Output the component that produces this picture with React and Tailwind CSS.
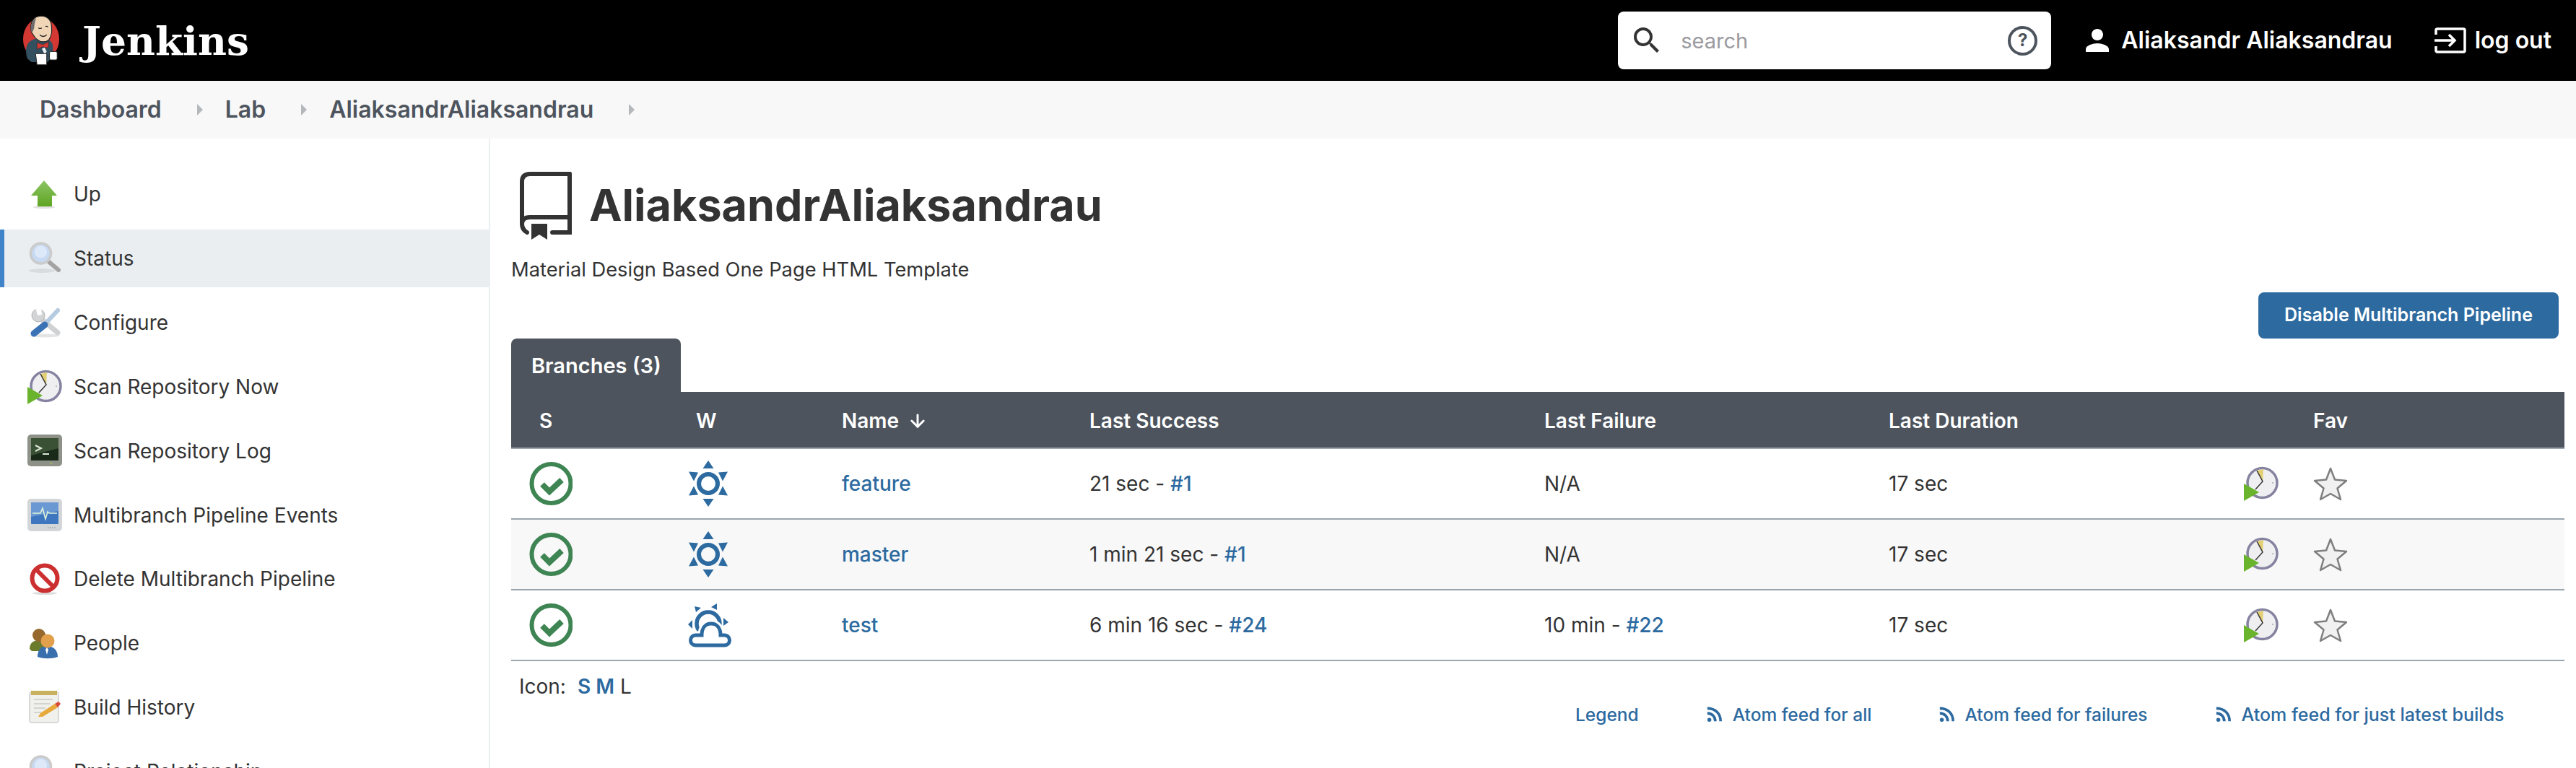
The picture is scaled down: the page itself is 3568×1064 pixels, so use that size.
import { MdSearch, MdPerson } from 'react-icons/md'
import { ArrowDown } from 'lucide-react'

const inter = "font-['Inter',sans-serif]"

function Mascot() {
  return (
    <svg viewBox="0 0 56 76" className="w-[54px] h-[76px] shrink-0">
      <ellipse cx="28" cy="36" rx="26" ry="30" fill="#d33833" />
      <path d="M8 64c-3-10-2-18 2-23 6-5 12-6 16-6l12 2c5 2 7 6 7 12v12l-8 8H14z" fill="#335061" />
      <path d="M14 26C11 14 16 3 28 3c9 0 15 6 15 16 1 9-1 14-4 18-4 4-12 4-16 0-4-2-6-7-9-11z" fill="#f0d6b7" stroke="#222" strokeWidth="1.2" />
      <path d="M14 26c-2-8 0-16 7-20-2 5-3 10-3 14l-2 5z" fill="#6d6b6d" />
      <path d="M24 20c2 1 4 1 5 0M34 18c2-1 3 0 4 1" stroke="#222" strokeWidth="1.2" fill="none" />
      <path d="M26 30c3 3 7 3 10 0" stroke="#222" strokeWidth="1.4" fill="none" />
      <path d="M22 41l8 3 9-4-1 9-8-2-8 4z" fill="#d33833" stroke="#222" strokeWidth=".6" />
      <path d="M29 50l4-2 3 6-3 4z" fill="#fff" opacity=".9" />
      <path d="M20 57h16v16H22z" fill="#fff" stroke="#222" strokeWidth="1" />
      <rect x="40" y="54" width="11" height="12" rx="2" fill="#fff" stroke="#222" strokeWidth="1" />
    </svg>
  )
}

function UpIcon() {
  return (
    <svg viewBox="0 0 48 48" className="w-12 h-12">
      <defs>
        <linearGradient id="upg" x1="0" y1="0" x2="0" y2="1"><stop offset="0" stopColor="#8cc465" /><stop offset="1" stopColor="#5fa521" /></linearGradient>
      </defs>
      <ellipse cx="23" cy="42" rx="15" ry="2" fill="#e2e2e2" />
      <path d="M23 5L41 26H34V41H14V26H5z" fill="url(#upg)" />
    </svg>
  )
}

function MagnifierIcon() {
  return (
    <svg viewBox="0 0 48 48" className="w-12 h-12">
      <ellipse cx="20" cy="41" rx="18" ry="3" fill="#d8dcdf" />
      <path d="M30 29l13 11" stroke="#a3a3a3" strokeWidth="6" strokeLinecap="round" />
      <circle cx="18.500" cy="17" r="14" fill="#c7daf2" stroke="#cbcbcb" strokeWidth="3.500" />
      <circle cx="18.500" cy="15" r="8.500" fill="#dde9f8" />
    </svg>
  )
}

function ToolsIcon() {
  return (
    <svg viewBox="0 0 48 48" className="w-12 h-12">
      <ellipse cx="24" cy="42" rx="20" ry="2.500" fill="#e4e4e4" />
      <path d="M17 17l25 21" stroke="#cfd1d2" strokeWidth="7" strokeLinecap="round" />
      <circle cx="15" cy="14" r="9" fill="#d2d4d5" stroke="#b5b5b5" strokeWidth="1" />
      <path d="M11 2l8 0 1 11-6 1z" fill="#fff" />
      <path d="M42 7L27 23" stroke="#b7cbe0" strokeWidth="6" strokeLinecap="round" />
      <path d="M24 27L9 39" stroke="#3b72b5" strokeWidth="9" strokeLinecap="round" />
    </svg>
  )
}

function ClockIcon() {
  return (
    <svg viewBox="0 0 48 48" className="w-12 h-12">
      <circle cx="25.500" cy="23" r="20.500" fill="#efeff2" stroke="#8583a0" strokeWidth="3.500" />
      <path d="M26 21L18 6l9-2z" fill="#e3cf74" />
      <path d="M18 6l8 15-10 11" stroke="#333" strokeWidth="1.5" fill="none" />
      <circle cx="40" cy="23" r="1" fill="#aaa" />
      <path d="M0 24L21 36 0 48z" fill="#6ab42d" />
    </svg>
  )
}

function TerminalIcon() {
  return (
    <svg viewBox="0 0 48 48" className="w-12 h-12">
      <rect x="0" y="1" width="48" height="44" rx="5" fill="#8d9188" />
      <rect x="5" y="6" width="38" height="31" fill="#1a2a18" />
      <path d="M5 6h38v14L5 30z" fill="#3a5135" />
      <path d="M11 16l8 4-8 4" stroke="#dfe8d8" strokeWidth="2" fill="none" />
      <path d="M21 28h9" stroke="#dfe8d8" strokeWidth="2" />
      <circle cx="33" cy="41" r="1" fill="#a6d04e" />
    </svg>
  )
}

function MonitorIcon() {
  return (
    <svg viewBox="0 0 48 48" className="w-12 h-12">
      <rect x="0" y="1" width="48" height="45" rx="5" fill="#d3d6d8" />
      <rect x="5" y="6" width="38" height="30" rx="1" fill="#3e76bf" />
      <path d="M5 6h38v12L5 26z" fill="#6a98d3" />
      <path d="M7 21h11l3-7 4 15 3-10 2 2h11" stroke="#dff3da" strokeWidth="1.6" fill="none" />
      <path d="M28 41h12" stroke="#b5b8ba" strokeWidth="2" strokeDasharray="2 1" />
    </svg>
  )
}

function NoIcon() {
  return (
    <svg viewBox="0 0 48 48" className="w-12 h-12">
      <ellipse cx="24" cy="44" rx="17" ry="2" fill="#ddd" />
      <circle cx="24" cy="23" r="17.500" fill="#fff" stroke="#cc2f2f" strokeWidth="6" />
      <path d="M12 11l24 24" stroke="#cc2f2f" strokeWidth="6" />
    </svg>
  )
}

function PeopleIcon() {
  return (
    <svg viewBox="0 0 48 48" className="w-12 h-12">
      <path d="M3 32c0-8 5-12 13-12s13 4 13 12l-8 3H6z" fill="#6a7c2b" />
      <circle cx="16" cy="13" r="9" fill="#96682e" />
      <path d="M14 43c0-10 5-15 13-15s15 5 15 15c-8 3-20 3-28 0z" fill="#3a6fae" />
      <path d="M27 30l-2 3 2 7 2-7z" fill="#fff" />
      <circle cx="28" cy="21" r="9.500" fill="#e2a04d" />
    </svg>
  )
}

function NotepadIcon() {
  return (
    <svg viewBox="0 0 48 48" className="w-12 h-12">
      <rect x="3" y="3" width="40" height="42" rx="2" fill="#f0f0ec" stroke="#bbb" />
      <rect x="5" y="1" width="36" height="6" fill="#c9b25f" />
      <path d="M9 13h26M9 19h22M9 25h16M9 31h10" stroke="#c9c9c5" strokeWidth="1.500" />
      <path d="M15 37l3-5 20-13 4 5-21 13z" fill="#e7a93b" />
      <path d="M38 19l4 5 4-5-3-3z" fill="#d9483b" />
    </svg>
  )
}

function CheckIcon() {
  return (
    <svg viewBox="0 0 60 60" className="w-[60px] h-[60px]">
      <circle cx="30.500" cy="30" r="27" fill="none" stroke="#3e8553" strokeWidth="6" />
      <path d="M18 31l10 10 17-16" fill="none" stroke="#3e8553" strokeWidth="8" strokeLinejoin="miter" />
    </svg>
  )
}

function SunIcon() {
  return (
    <svg viewBox="0 0 56 64" className="w-14 h-16 fill-[#2c6aa0]">
      <circle cx="28" cy="32" r="13" fill="none" stroke="#2c6aa0" strokeWidth="6" />
      <path d="M28 0l7.500 11h-15z" />
      <path d="M28 64l7.500-11h-15z" />
      <path d="M1 15.500l13 1 -6 12z" />
      <path d="M55 15.500l-13 1 6 12z" />
      <path d="M1 48.500l13-1 -6-12z" />
      <path d="M55 48.500l-13-1 6-12z" />
    </svg>
  )
}

function CloudIcon() {
  return (
    <svg viewBox="0 0 61 61" className="w-[61px] h-[61px] fill-[#2c6aa0]">
      <circle cx="28" cy="28" r="16" fill="none" stroke="#2c6aa0" strokeWidth="5.500" />
      <path d="M11 58H50C60 58 60 44 50 44H45C45 34 40 28 32 28C24 28 19 34 19 44H11C1 44 1 58 11 58z" fill="#fff" stroke="#fff" strokeWidth="11" />
      <path d="M11 58H50C60 58 60 44 50 44H45C45 34 40 28 32 28C24 28 19 34 19 44H11C1 44 1 58 11 58z" fill="#fff" stroke="#2c6aa0" strokeWidth="5" />
      <path d="M0 29l6-6v12zM49 20l7 6-7 5zM9 4l9 2-7 6zM40 0l-8 5 8 4z" />
    </svg>
  )
}

function StarIcon() {
  return (
    <svg viewBox="0 0 48 48" className="w-12 h-12">
      <path d="M24 3l6 15.500 16 1.500-12.500 10.500L38 46l-14-8-14 8 4.500-15.500L2 20l16-1.500z" fill="#f1f1f1" stroke="#7f7f7f" strokeWidth="2.500" strokeLinejoin="round" />
    </svg>
  )
}

function FeedIcon() {
  return (
    <svg viewBox="0 0 24 24" className="w-[22px] h-[22px] mr-[15px] fill-none stroke-[#2c6aa0] stroke-[4]">
      <circle cx="5" cy="20" r="3" className="fill-[#2c6aa0] stroke-none" />
      <path d="M2 10c7 0 12 5 12 12" />
      <path d="M2 2.500c12 0 20 8 20 19.500" />
    </svg>
  )
}

const sideItems = [
  ['Up', UpIcon],
  ['Status', MagnifierIcon],
  ['Configure', ToolsIcon],
  ['Scan Repository Now', ClockIcon],
  ['Scan Repository Log', TerminalIcon],
  ['Multibranch Pipeline Events', MonitorIcon],
  ['Delete Multibranch Pipeline', NoIcon],
  ['People', PeopleIcon],
  ['Build History', NotepadIcon],
  ['Project Relationship', MagnifierIcon],
]

const rows = [
  { name: 'feature', Weather: SunIcon, ok: '21 sec - ', okNum: '#1', fail: 'N/A', failNum: null },
  { name: 'master', Weather: SunIcon, ok: '1 min 21 sec - ', okNum: '#1', fail: 'N/A', failNum: null, alt: true },
  { name: 'test', Weather: CloudIcon, ok: '6 min 16 sec - ', okNum: '#24', fail: '10 min - ', failNum: '#22' },
]

function Crumb({ children }) {
  return (
    <>
      <span>{children}</span>
      <span className="w-0 h-0 ml-[49px] mr-[31px] border-y-[8px] border-y-transparent border-l-[8px] border-l-[#b4b8bc]" />
    </>
  )
}

export default function App() {
  return (
    <div className={`${inter} h-[1064px] overflow-hidden bg-white text-[28px] text-[#333]`}>
      <header className="h-28 bg-black flex items-center text-white">
        <div className="ml-[30px] flex items-center">
          <Mascot />
          <span className="ml-[30px] font-['DejaVu_Serif',serif] font-bold text-[55px] leading-none">Jenkins</span>
        </div>
        <div className="ml-auto flex items-center w-[600px] h-20 bg-white rounded-lg pl-[16px] pr-[19px]">
          <MdSearch className="w-[48px] h-[48px] text-[#333]" />
          <span className="ml-[23px] mt-[2px] text-[29px] text-[#9a9a9f] font-normal">search</span>
          <span className="ml-auto w-[41px] h-[41px] rounded-full border-[4px] border-[#4d545d] flex items-center justify-center text-[24px] font-bold text-[#4d545d]">?</span>
        </div>
        <MdPerson className="ml-[40px] w-[48px] h-[48px]" />
        <span className="ml-[9px] text-[32px] font-semibold">Aliaksandr Aliaksandrau</span>
        <svg viewBox="0 0 44 36" className="ml-[58px] w-[44px] h-[36px] fill-none stroke-white stroke-[3.5]">
          <path d="M2 10V4a2 2 0 0 1 2-2h36a2 2 0 0 1 2 2v28a2 2 0 0 1-2 2H4a2 2 0 0 1-2-2v-6" />
          <path d="M0 18h28M20 10l8 8-8 8" />
        </svg>
        <span className="ml-[12px] mr-[34px] text-[32px] font-semibold">log out</span>
      </header>

      <nav className="h-20 bg-[#f8f8f8] flex items-center pl-[55px] text-[32px] font-semibold text-[#4d545d]">
        <Crumb>Dashboard</Crumb>
        <Crumb>Lab</Crumb>
        <Crumb>AliaksandrAliaksandrau</Crumb>
      </nav>

      <div className="flex">
        <aside className="w-[679px] h-[872px] shrink-0 border-r-2 border-[#eaeff2] pt-[33px] overflow-hidden">
          {sideItems.map(([label, Icon]) => (
            <div key={label} className={`h-[88.8px] flex items-center pl-[38px] border-l-[6px] ${label === 'Status' ? 'bg-[#eaeef1] border-[#4083c9] !h-20 my-[4.500px]' : 'border-transparent'}`}>
              <span className="-ml-[6px] w-12 h-12 shrink-0"><Icon /></span>
              <span className="ml-[16px]">{label}</span>
            </div>
          ))}
        </aside>

        <main className="flex-1 pl-[29px] pr-[16px] pt-[46px] min-w-0">
          <div className="flex items-center h-[96px]">
            <svg viewBox="0 0 74 96" className="w-[74px] h-[96px] ml-[12px] fill-none stroke-[#333] stroke-[6] [stroke-linecap:round]">
              <path d="M69 3H14Q3 3 3 14V72Q3 80 10 84" />
              <path d="M69 3V84H45" />
              <path d="M3 72Q3 63 14 63H69" />
              <path d="M16 72H38V94L27 87 16 94z" className="fill-[#333] stroke-none" />
            </svg>
            <h1 className="ml-[22px] -mt-[4px] text-[61px] font-bold leading-none">AliaksandrAliaksandrau</h1>
          </div>
          <p className="mt-[23px] leading-[34px] text-[27.3px]">Material Design Based One Page HTML Template</p>

          <div className="flex justify-end pr-[8px] mt-[14px] h-[64px]">
            <button className="w-[416px] h-[64px] rounded-lg bg-[#2c6aa0] text-white text-[25px] font-semibold">Disable Multibranch Pipeline</button>
          </div>

          <div className="w-[235px] h-[74px] bg-[#4d545d] rounded-t-lg text-white font-semibold pt-[21px] pl-[28px] leading-[34px] text-[29px]">Branches (3)</div>

          <table className="w-[2844px] table-fixed border-collapse text-[28px]">
            <thead>
              <tr className="h-[78px] bg-[#4d545d] text-white font-semibold border-b-2 border-[#9aa5ad] text-left">
                <th className="w-[217px] pl-[39px] pt-[2px] font-semibold">S</th>
                <th className="w-[217px] pl-[39px] pt-[2px] font-semibold">W</th>
                <th className="w-[342px] pl-[24px] pt-[2px] font-semibold"><span className="inline-flex items-center">Name<ArrowDown strokeWidth={2.5} className="ml-[12px] w-[28px] h-[28px]" /></span></th>
                <th className="w-[631px] pl-[25px] pt-[2px] font-semibold">Last Success</th>
                <th className="w-[477px] pl-[24px] pt-[2px] font-semibold">Last Failure</th>
                <th className="w-[492px] pl-[24px] pt-[2px] font-semibold">Last Duration</th>
                <th className="w-[96px]"></th>
                <th className="pl-[24px] pt-[2px] font-semibold">Fav</th>
              </tr>
            </thead>
            <tbody>
              {rows.map((r) => (
                <tr key={r.name} className={`h-[98px] border-b-2 border-[#9aa5ad] ${r.alt ? 'bg-[#f8f8f8]' : ''}`}>
                  <td className="pl-[25px]"><span className="block w-[60px] h-[60px]"><CheckIcon /></span></td>
                  <td className="pl-[28px]"><span className="block w-16"><r.Weather /></span></td>
                  <td className="pl-[24px] font-medium text-[#2c6aa0]">{r.name}</td>
                  <td className="pl-[25px]">{r.ok}<span className="font-medium text-[#2c6aa0]">{r.okNum}</span></td>
                  <td className="pl-[24px]">{r.fail}{r.failNum && <span className="font-medium text-[#2c6aa0]">{r.failNum}</span>}</td>
                  <td className="pl-[24px]">17 sec</td>
                  <td className="pl-[24px]"><span className="block w-12 h-12"><ClockIcon /></span></td>
                  <td className="pl-[24px]"><span className="block w-12 h-12"><StarIcon /></span></td>
                </tr>
              ))}
            </tbody>
          </table>

          <div className="pl-[11px] pt-[18px] leading-[34px]">
            Icon:<span className="ml-[16px] font-semibold text-[#2c6aa0]">S M</span> L
          </div>
          <div className="flex items-center mt-[6px] text-[24.5px] font-medium text-[#2c6aa0] pl-[1474px] leading-[32px]">
            <span>Legend</span>
            <span className="ml-[93px] flex items-center"><FeedIcon />Atom feed for all</span>
            <span className="ml-[92px] flex items-center"><FeedIcon />Atom feed for failures</span>
            <span className="ml-[93px] flex items-center"><FeedIcon /><span className="text-[25px]">Atom feed for just latest builds</span></span>
          </div>
        </main>
      </div>
    </div>
  )
}
